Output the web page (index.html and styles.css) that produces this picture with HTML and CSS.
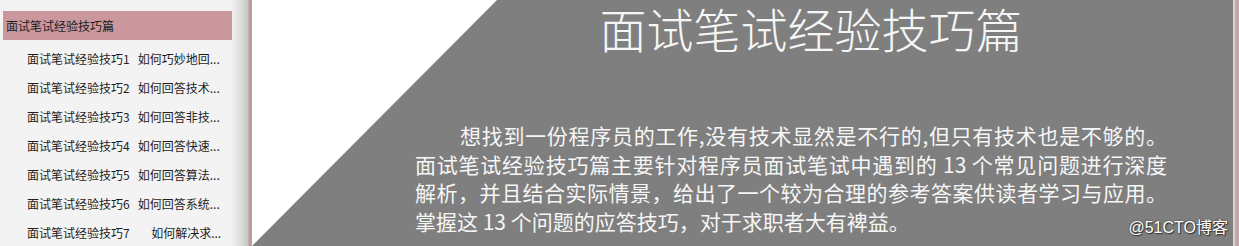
FILE: index.html
```html
<!DOCTYPE html>
<html lang="zh-CN">
<head>
  <meta charset="UTF-8">
  <title>面试笔试经验技巧篇</title>
  <link rel="stylesheet" href="styles.css">
</head>
<body>
  <div class="page">
    <div class="sidebar">
      <div class="chapter">面试笔试经验技巧篇</div>
      <ul class="toc">
        <li>面试笔试经验技巧1   如何巧妙地回...</li>
        <li>面试笔试经验技巧2   如何回答技术...</li>
        <li>面试笔试经验技巧3   如何回答非技...</li>
        <li>面试笔试经验技巧4   如何回答快速...</li>
        <li>面试笔试经验技巧5   如何回答算法...</li>
        <li>面试笔试经验技巧6   如何回答系统...</li>
        <li>面试笔试经验技巧7        如何解决求...</li>
      </ul>
    </div>
    <div class="splitter"></div>
    <div class="main">
      <div class="panel">
        <h1 class="title">面试笔试经验技巧篇</h1>
        <p class="intro">
          <span class="line first">想找到一份程序员的工作,没有技术显然是不行的,但只有技术也是不够的。</span>
          <span class="line">面试笔试经验技巧篇主要针对程序员面试笔试中遇到的 13 个常见问题进行深度</span>
          <span class="line">解析，并且结合实际情景，给出了一个较为合理的参考答案供读者学习与应用。</span>
          <span class="line last">掌握这 13 个问题的应答技巧，对于求职者大有裨益。</span>
        </p>
        <div class="mark">@51CTO博客</div>
      </div>
    </div>
    <div class="edge"></div>
  </div>
</body>
</html>
```
FILE: styles.css
```css
body {
  margin: 0;
  font-family: "Noto Sans CJK SC", "Noto Sans", sans-serif;
}
.page {
  display: flex;
  height: 246px;
  overflow: hidden;
}
.sidebar {
  width: 232px;
  flex: none;
  background-color: #f3f3f3;
  padding-top: 11px;
  box-sizing: border-box;
  font-size: 12px;
  color: #1e1e1e;
}
.chapter {
  margin-left: 3px;
  height: 29px;
  line-height: 29px;
  padding-left: 3px;
  background-color: #c9979c;
}
.toc {
  list-style: none;
  margin: 0;
  padding: 4px 0 0 27px;
}
.toc li {
  height: 29px;
  line-height: 29px;
  white-space: pre;
}
.splitter {
  width: 20px;
  flex: none;
  background: linear-gradient(to right, #f0f0f0 0, #e6e6e6 25%, #dcdcdc 45%, #cfd6cf 60%, #bfc9c2 80%, #c49aa0 85%, #c49aa0 100%);
}
.main {
  flex: 1;
  background-color: #fff;
}
.panel {
  position: relative;
  height: 100%;
  background-color: #7f7f7f;
  clip-path: polygon(245px 0, 100% 0, 100% 100%, 0 100%);
  padding: 4px 0 0 163px;
  box-sizing: border-box;
  color: #f6f6f6;
}
.title {
  margin: 0;
  width: 752px;
  padding-left: 40px;
  box-sizing: border-box;
  text-align: center;
  font-size: 47px;
  font-weight: 300;
  line-height: 48px;
}
.intro {
  margin: 69px 0 0 0;
  width: 752px;
  font-size: 21px;
  line-height: 28.5px;
}
.line {
  display: block;
  text-align: justify;
  text-align-last: justify;
}
.line.first {
  text-indent: 45px;
}
.line.last {
  text-align-last: left;
}
.mark {
  position: absolute;
  right: 5px;
  bottom: 8px;
  font-family: "Liberation Sans", Arial, "Noto Sans CJK SC", sans-serif;
  font-size: 16px;
  color: #fff;
  text-shadow: 0 0 2px #333, 1px 1px 1px #333;
}
.edge {
  width: 6px;
  flex: none;
  background: linear-gradient(to right, #d9d3d5 0, #d9d3d5 30%, #c8a2aa 30%, #c8a2aa 100%);
}
```
